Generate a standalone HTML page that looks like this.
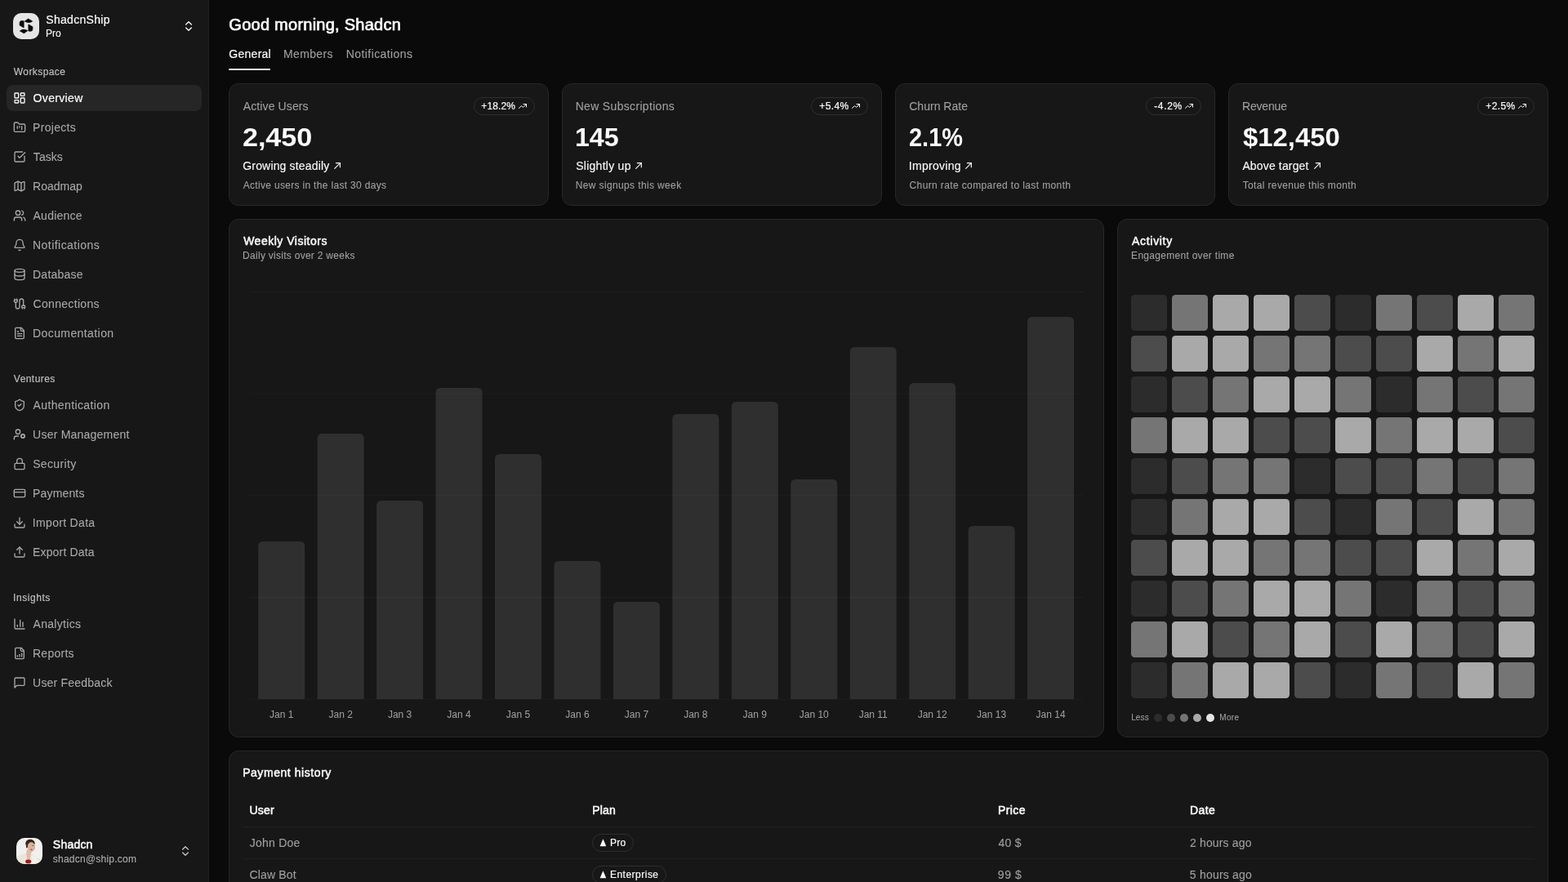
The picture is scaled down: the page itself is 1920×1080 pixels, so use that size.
<!DOCTYPE html>
<html lang="en">
<head>
<meta charset="utf-8">
<title>ShadcnShip – Overview</title>
<meta name="viewport" content="width=1920, initial-scale=1">
<style>
*{box-sizing:border-box;margin:0;padding:0}
html,body{width:1920px;height:1080px;overflow:hidden;background:#0a0a0a}
body{font-family:"Liberation Sans",sans-serif;color:#fafafa;position:relative}
a{color:inherit;text-decoration:none}
i,em,b{font-style:normal;font-weight:inherit}
.t{position:relative;display:inline-block;white-space:nowrap;vertical-align:top}
.sidebar{will-change:transform;position:absolute;left:0;top:0;width:256px;height:1080px;background:#171717;border-right:1px solid #202020}
.brand .logo{position:absolute;left:16px;top:16px;width:32px;height:32px;border-radius:10px;background:#e5e5e5;overflow:hidden}
.lg{fill:#0a0a0a}
.bname{position:absolute;left:56px;top:14px;font-size:14px;line-height:20px;white-space:nowrap}
.bplan{position:absolute;left:56px;top:33px;font-size:12px;line-height:16px;white-space:nowrap}
.ic{display:block;flex:none}
.chev{position:absolute;left:223px;top:24px;color:#fafafa}
.chev2{position:absolute;left:219px;top:1034px;color:#c4c4c4}
.glabel{position:absolute;left:16px;height:32px;line-height:32px;font-size:12px;color:#bebebe;white-space:nowrap}
.mi{position:absolute;left:8px;width:239px;height:32px;border-radius:8px;color:#a9a9a9;font-size:14px;line-height:20px;white-space:nowrap}
.mi .ic{position:absolute;left:8px;top:8px}
.mi .t{position:absolute;left:32px;top:6px}
.mi.active{background:#262626;color:#fafafa}
.user .avatar{position:absolute;left:20px;top:1026px;width:32px;height:32px;border-radius:10px;overflow:hidden}
.avb{filter:blur(.7px)}
.uname{position:absolute;left:64px;top:1024px;font-size:14px;line-height:20px;white-space:nowrap}
.umail{position:absolute;left:64px;top:1044px;font-size:12px;line-height:16px;color:#b0b0b0;white-space:nowrap}
main{will-change:transform;position:absolute;left:0;top:0;width:1920px;height:1080px}
.title{position:absolute;left:280px;top:16px;font-size:20px;line-height:28px;font-weight:400;white-space:nowrap}
.tabs{position:absolute;left:0;top:0}
.tab{position:absolute;top:56px;font-size:14px;line-height:20px;color:#a1a1a1;white-space:nowrap}
.tab.on{color:#fafafa}
.t1{left:280px}.t2{left:347px}.t3{left:424px}
.tabline{position:absolute;left:280px;top:84px;width:51px;height:2px;border-radius:1px;background:#fafafa}
.card{position:absolute;background:#171717;border:1px solid #272727;border-radius:12px}
.stat{top:102px;width:392px;height:150px}
.slabel{position:absolute;left:16px;top:17px;font-size:14px;line-height:20px;color:#a1a1a1;white-space:nowrap}
.badge{position:absolute;right:16px;top:16px;height:22px;border:1px solid #2e2e2e;border-radius:11px;font-size:12px;line-height:16px;white-space:nowrap}
.badge .t{position:absolute;left:8px;top:2px}
.badge .ic{position:absolute;right:8px;top:4px}
.sval{position:absolute;left:16px;top:47px;font-size:30.500px;line-height:36px;font-weight:400;white-space:nowrap}
.strend{position:absolute;left:16px;top:90px;font-size:14px;line-height:20px;white-space:nowrap}
.strend .ic{position:absolute;top:2px}
.sdesc{position:absolute;left:16px;top:116px;font-size:12px;line-height:16px;color:#a1a1a1;white-space:nowrap}
.chartcard{left:280px;top:268px;width:1072px;height:635px}
.actcard{left:1368px;top:268px;width:528px;height:635px}
.paycard{left:280px;top:919px;width:1616px;height:200px}
.ctitle{position:absolute;left:16px;top:16px;font-size:14px;line-height:20px;font-weight:400;white-space:nowrap}
.csub{position:absolute;left:16px;top:36px;font-size:12px;line-height:16px;color:#a1a1a1;white-space:nowrap}
.chart{position:absolute;left:-1px;top:-1px}
.chart .grid line{stroke:#1f1f1f;stroke-width:1}
.chart .bars path{fill:#fafafa;fill-opacity:.11}
.chart .xl text{font-family:"Liberation Sans",sans-serif;font-size:12px;fill:#a1a1a1}
.heat{position:absolute;left:16px;top:92px;width:494px;height:494px}
.heat i{position:absolute;width:44px;height:44px;border-radius:4.500px}
.l0{background:#2c2c2c}.l1{background:#4c4c4c}.l2{background:#757575}.l3{background:#a9a9a9}
.legend{position:absolute;left:16px;top:604px;height:12px;font-size:10px;line-height:12px;color:#a1a1a1;white-space:nowrap}
.legend div{position:absolute;top:0}
.legend .less{left:0}.legend .more{left:108px}
.legend .d{position:absolute;top:1px;width:10px;height:10px;border-radius:50%}
.d0{left:28px;background:#2c2c2c}.d1{left:44px;background:#4c4c4c}.d2{left:60px;background:#757575}.d3{left:76px;background:#a9a9a9}.d4{left:92px;background:#e5e5e5}
.th,.tr{position:absolute;left:16px;width:1582px;font-size:14px;line-height:20px;white-space:nowrap}
.th{top:52px;height:41px;font-weight:400;border-bottom:1px solid #212121}
.tr{height:39px;color:#a1a1a1;border-bottom:1px solid #212121}
.th>div{position:absolute;top:10px}
.tr>div{position:absolute;top:9px}
.c1{left:8px}.c2{left:428px}.c3{left:925px}.c4{left:1160px}
.pbadge{position:absolute;left:0;top:-1px;height:22px;border:1px solid #2e2e2e;border-radius:11px;font-size:12px;line-height:16px;color:#fafafa}
.pbadge .tri{position:absolute;left:8px;top:4.800px}
.pbadge .t{position:absolute;left:21px;top:2px}
/* weight emulation */
.t{-webkit-text-stroke:.08px currentColor}
.bname .t,.glabel .t,.mi.active .t,.badge .t,.pbadge .t,.tab.on .t{-webkit-text-stroke:.2px currentColor}
.strend .t{-webkit-text-stroke:.13px currentColor}
.title .t{-webkit-text-stroke:.7px currentColor}
.sval .t{-webkit-text-stroke:0;font-weight:700}
.ctitle .t,.th .t,.uname .t{-webkit-text-stroke:.5px currentColor}

#bname{left:0.25px;letter-spacing:0.307px}
#bplan{left:0.09px;letter-spacing:-0.009px}
#g0{left:0.87px;letter-spacing:0.398px}
#g1{left:0.85px;letter-spacing:0.442px}
#g2{left:0.04px;letter-spacing:0.554px}
#m0{left:32.60px;letter-spacing:0.333px}
#m1{left:32.00px;letter-spacing:0.322px}
#m2{left:32.86px;letter-spacing:0.032px}
#m3{left:32.00px;letter-spacing:0.026px}
#m4{left:32.56px;letter-spacing:0.233px}
#m5{left:32.00px;letter-spacing:0.460px}
#m6{left:32.00px;letter-spacing:0.246px}
#m7{left:32.53px;letter-spacing:0.317px}
#m8{left:32.00px;letter-spacing:0.413px}
#m9{left:32.56px;letter-spacing:0.377px}
#m10{left:32.09px;letter-spacing:0.222px}
#m11{left:32.18px;letter-spacing:0.347px}
#m12{left:32.00px;letter-spacing:0.169px}
#m13{left:31.86px;letter-spacing:0.312px}
#m14{left:32.00px;letter-spacing:0.162px}
#m15{left:32.56px;letter-spacing:0.299px}
#m16{left:32.00px;letter-spacing:0.255px}
#m17{left:32.09px;letter-spacing:0.206px}
#uname{left:0.85px;letter-spacing:0.210px}
#umail{left:0.82px;letter-spacing:0.232px}
#title{left:0.36px;letter-spacing:0.251px}
#tab1{left:0.36px;letter-spacing:0.259px}
#tab2{left:0.12px;letter-spacing:0.327px}
#tab3{left:-0.26px;letter-spacing:0.418px}
#s0l{left:0.74px;letter-spacing:0.118px}
#s0v{left:0.19px;letter-spacing:-0.065px;transform:scaleX(1.1194);transform-origin:0 50%}
#s0t{left:0.28px;letter-spacing:0.166px}
#s0d{left:0.67px;letter-spacing:0.319px}
#s1l{left:-0.36px;letter-spacing:0.329px}
#s1v{left:-0.52px;letter-spacing:-0.080px;transform:scaleX(1.0553);transform-origin:0 50%}
#s1t{left:0.23px;letter-spacing:0.260px}
#s1d{left:-0.29px;letter-spacing:0.369px}
#s2l{left:0.24px;letter-spacing:0.018px}
#s2v{left:-0.32px;letter-spacing:0.008px;transform:scaleX(0.9483);transform-origin:0 50%}
#s2t{left:-0.25px;letter-spacing:0.297px}
#s2d{left:0.57px;letter-spacing:0.376px}
#s3l{left:-0.02px;letter-spacing:-0.183px}
#s3v{left:0.51px;letter-spacing:-0.009px;transform:scaleX(1.0773);transform-origin:0 50%}
#s3t{left:0.38px;letter-spacing:0.151px}
#s3d{left:0.68px;letter-spacing:0.358px}
#s0b{left:8.35px;letter-spacing:0.133px}
#s1b{left:9.35px;letter-spacing:0.366px}
#s2b{left:9.13px;letter-spacing:0.684px}
#s3b{left:9.35px;letter-spacing:0.366px}
#ct1{left:1.14px;letter-spacing:0.513px}
#cs1{left:0.11px;letter-spacing:0.275px}
#ct2{left:1.10px;letter-spacing:0.677px}
#cs2{left:0.11px;letter-spacing:0.288px}
#less{left:0.18px;letter-spacing:0.116px}
#more{left:0.26px;letter-spacing:0.306px}
#pt{left:0.13px;letter-spacing:0.561px}
#h1{left:0.61px;letter-spacing:0.130px}
#h2{left:0.13px;letter-spacing:0.205px}
#h3{left:-0.12px;letter-spacing:0.446px}
#h4{left:-0.12px;letter-spacing:0.425px}
#r0c1{left:0.85px;letter-spacing:0.213px}
#r1c1{left:0.62px;letter-spacing:0.143px}
#r0c2{left:20.97px;letter-spacing:0.210px}
#r1c2{left:20.96px;letter-spacing:0.489px}
#r0c3{left:0.48px;letter-spacing:0.292px}
#r1c3{left:-0.19px;letter-spacing:0.567px}
#r0c4{left:-0.03px;letter-spacing:0.157px}
#r1c4{left:-0.17px;letter-spacing:0.207px}
</style>
</head>
<body>
<aside class="sidebar">
<div class="brand">
<div class="logo"><svg width="32" height="32" viewBox="0 0 32 32"><g class="lg" stroke="#0a0a0a" stroke-width=".800" stroke-linejoin="round"><path d="M14.200 10.100 18.600 7.100 23.600 10Q21.500 11.600 19 11.600 16.500 11.400 14.200 10.100Z"/><path d="M13.100 9.800 10.600 9.500Q8.100 9.600 8.100 12V14.900L13.100 17.800Z"/><path d="M18.900 13.900 23.900 16.800V19.700Q23.900 22.100 21.400 22.200L18.900 21.900Z"/><path d="M8.400 21.900Q10.600 20.200 13 20.100 15.500 20.300 17.800 21.600L13.400 24.700Z"/></g></svg></div>
<div class="bname"><span id="bname" class="t">ShadcnShip</span></div>
<div class="bplan"><span id="bplan" class="t">Pro</span></div>
<svg class="ic chev" width="16" height="16" viewBox="0 0 24 24" fill="none" stroke="currentColor" stroke-width="2" stroke-linecap="round" stroke-linejoin="round"><path d="m7 15 5 5 5-5"/><path d="m7 9 5-5 5 5"/></svg>
</div>
<div class="glabel" style="top:72px"><span id="g0" class="t">Workspace</span></div>
<a class="mi active" style="top:104px"><svg class="ic" width="16" height="16" viewBox="0 0 24 24" fill="none" stroke="currentColor" stroke-width="2" stroke-linecap="round" stroke-linejoin="round"><rect width="7" height="9" x="3" y="3" rx="1"/><rect width="7" height="5" x="14" y="3" rx="1"/><rect width="7" height="9" x="14" y="12" rx="1"/><rect width="7" height="5" x="3" y="16" rx="1"/></svg><span id="m0" class="t">Overview</span></a>
<a class="mi" style="top:140px"><svg class="ic" width="16" height="16" viewBox="0 0 24 24" fill="none" stroke="currentColor" stroke-width="2" stroke-linecap="round" stroke-linejoin="round"><path d="M4 20h16a2 2 0 0 0 2-2V8a2 2 0 0 0-2-2h-7.93a2 2 0 0 1-1.66-.9l-.82-1.2A2 2 0 0 0 7.93 3H4a2 2 0 0 0-2 2v13c0 1.1.9 2 2 2Z"/><path d="M8 10v4"/><path d="M12 10v2"/><path d="M16 10v6"/></svg><span id="m1" class="t">Projects</span></a>
<a class="mi" style="top:176px"><svg class="ic" width="16" height="16" viewBox="0 0 24 24" fill="none" stroke="currentColor" stroke-width="2" stroke-linecap="round" stroke-linejoin="round"><path d="M21 10.656V19a2 2 0 0 1-2 2H5a2 2 0 0 1-2-2V5a2 2 0 0 1 2-2h12.344"/><path d="m9 11 3 3L22 4"/></svg><span id="m2" class="t">Tasks</span></a>
<a class="mi" style="top:212px"><svg class="ic" width="16" height="16" viewBox="0 0 24 24" fill="none" stroke="currentColor" stroke-width="2" stroke-linecap="round" stroke-linejoin="round"><path d="M14.106 5.553a2 2 0 0 0 1.788 0l3.659-1.83A1 1 0 0 1 21 4.619v12.764a1 1 0 0 1-.553.894l-4.553 2.277a2 2 0 0 1-1.788 0l-4.212-2.106a2 2 0 0 0-1.788 0l-3.659 1.83A1 1 0 0 1 3 19.381V6.618a1 1 0 0 1 .553-.894l4.553-2.277a2 2 0 0 1 1.788 0z"/><path d="M15 5.764v15"/><path d="M9 3.236v15"/></svg><span id="m3" class="t">Roadmap</span></a>
<a class="mi" style="top:248px"><svg class="ic" width="16" height="16" viewBox="0 0 24 24" fill="none" stroke="currentColor" stroke-width="2" stroke-linecap="round" stroke-linejoin="round"><path d="M16 21v-2a4 4 0 0 0-4-4H6a4 4 0 0 0-4 4v2"/><circle cx="9" cy="7" r="4"/><path d="M22 21v-2a4 4 0 0 0-3-3.87"/><path d="M16 3.13a4 4 0 0 1 0 7.75"/></svg><span id="m4" class="t">Audience</span></a>
<a class="mi" style="top:284px"><svg class="ic" width="16" height="16" viewBox="0 0 24 24" fill="none" stroke="currentColor" stroke-width="2" stroke-linecap="round" stroke-linejoin="round"><path d="M10.268 21a2 2 0 0 0 3.464 0"/><path d="M3.262 15.326A1 1 0 0 0 4 17h16a1 1 0 0 0 .74-1.673C19.41 13.956 18 12.499 18 8A6 6 0 0 0 6 8c0 4.499-1.411 5.956-2.738 7.326"/></svg><span id="m5" class="t">Notifications</span></a>
<a class="mi" style="top:320px"><svg class="ic" width="16" height="16" viewBox="0 0 24 24" fill="none" stroke="currentColor" stroke-width="2" stroke-linecap="round" stroke-linejoin="round"><ellipse cx="12" cy="5" rx="9" ry="3"/><path d="M3 5V19A9 3 0 0 0 21 19V5"/><path d="M3 12A9 3 0 0 0 21 12"/></svg><span id="m6" class="t">Database</span></a>
<a class="mi" style="top:356px"><svg class="ic" width="16" height="16" viewBox="0 0 24 24" fill="none" stroke="currentColor" stroke-width="2" stroke-linecap="round" stroke-linejoin="round"><path d="M17 21v-2a1 1 0 0 1-1-1v-1a2 2 0 0 1 2-2h2a2 2 0 0 1 2 2v1a1 1 0 0 1-1 1"/><path d="M19 15V6.5a1 1 0 0 0-7 0v11a1 1 0 0 1-7 0V9"/><path d="M21 21v-2h-4"/><path d="M3 5h4V3"/><path d="M7 5a1 1 0 0 1 1 1v1a2 2 0 0 1-2 2H4a2 2 0 0 1-2-2V6a1 1 0 0 1 1-1V3"/></svg><span id="m7" class="t">Connections</span></a>
<a class="mi" style="top:392px"><svg class="ic" width="16" height="16" viewBox="0 0 24 24" fill="none" stroke="currentColor" stroke-width="2" stroke-linecap="round" stroke-linejoin="round"><path d="M15 2H6a2 2 0 0 0-2 2v16a2 2 0 0 0 2 2h12a2 2 0 0 0 2-2V7Z"/><path d="M14 2v4a2 2 0 0 0 2 2h4"/><path d="M10 9H8"/><path d="M16 13H8"/><path d="M16 17H8"/></svg><span id="m8" class="t">Documentation</span></a>
<div class="glabel" style="top:448px"><span id="g1" class="t">Ventures</span></div>
<a class="mi" style="top:480px"><svg class="ic" width="16" height="16" viewBox="0 0 24 24" fill="none" stroke="currentColor" stroke-width="2" stroke-linecap="round" stroke-linejoin="round"><path d="M20 13c0 5-3.5 7.5-7.66 8.95a1 1 0 0 1-.67-.01C7.5 20.500 4 18 4 13V6a1 1 0 0 1 1-1c2 0 4.5-1.200 6.240-2.720a1.170 1.170 0 0 1 1.520 0C14.510 3.810 17 5 19 5a1 1 0 0 1 1 1z"/><path d="m9 12 2 2 4-4"/></svg><span id="m9" class="t">Authentication</span></a>
<a class="mi" style="top:516px"><svg class="ic" width="16" height="16" viewBox="0 0 24 24" fill="none" stroke="currentColor" stroke-width="2" stroke-linecap="round" stroke-linejoin="round"><path d="M10 15H6a4 4 0 0 0-4 4v2"/><path d="m14.305 16.530.923-.382"/><path d="m15.228 13.852-.923-.383"/><path d="m16.852 12.228-.383-.923"/><path d="m16.852 17.772-.383.924"/><path d="m19.148 12.228.383-.923"/><path d="m19.530 18.696-.382-.924"/><path d="m20.772 13.852.924-.383"/><path d="m20.772 16.148.924.383"/><circle cx="18" cy="15" r="3"/><circle cx="9" cy="7" r="4"/></svg><span id="m10" class="t">User Management</span></a>
<a class="mi" style="top:552px"><svg class="ic" width="16" height="16" viewBox="0 0 24 24" fill="none" stroke="currentColor" stroke-width="2" stroke-linecap="round" stroke-linejoin="round"><rect width="18" height="11" x="3" y="11" rx="2" ry="2"/><path d="M7 11V7a5 5 0 0 1 10 0v4"/></svg><span id="m11" class="t">Security</span></a>
<a class="mi" style="top:588px"><svg class="ic" width="16" height="16" viewBox="0 0 24 24" fill="none" stroke="currentColor" stroke-width="2" stroke-linecap="round" stroke-linejoin="round"><rect width="20" height="14" x="2" y="5" rx="2"/><line x1="2" x2="22" y1="10" y2="10"/></svg><span id="m12" class="t">Payments</span></a>
<a class="mi" style="top:624px"><svg class="ic" width="16" height="16" viewBox="0 0 24 24" fill="none" stroke="currentColor" stroke-width="2" stroke-linecap="round" stroke-linejoin="round"><path d="M12 15V3"/><path d="M21 15v4a2 2 0 0 1-2 2H5a2 2 0 0 1-2-2v-4"/><path d="m7 10 5 5 5-5"/></svg><span id="m13" class="t">Import Data</span></a>
<a class="mi" style="top:660px"><svg class="ic" width="16" height="16" viewBox="0 0 24 24" fill="none" stroke="currentColor" stroke-width="2" stroke-linecap="round" stroke-linejoin="round"><path d="M12 3v12"/><path d="m17 8-5-5-5 5"/><path d="M21 15v4a2 2 0 0 1-2 2H5a2 2 0 0 1-2-2v-4"/></svg><span id="m14" class="t">Export Data</span></a>
<div class="glabel" style="top:716px"><span id="g2" class="t">Insights</span></div>
<a class="mi" style="top:748px"><svg class="ic" width="16" height="16" viewBox="0 0 24 24" fill="none" stroke="currentColor" stroke-width="2" stroke-linecap="round" stroke-linejoin="round"><path d="M3 3v16a2 2 0 0 0 2 2h16"/><path d="M18 17V9"/><path d="M13 17V5"/><path d="M8 17v-3"/></svg><span id="m15" class="t">Analytics</span></a>
<a class="mi" style="top:784px"><svg class="ic" width="16" height="16" viewBox="0 0 24 24" fill="none" stroke="currentColor" stroke-width="2" stroke-linecap="round" stroke-linejoin="round"><path d="M15 2H6a2 2 0 0 0-2 2v16a2 2 0 0 0 2 2h12a2 2 0 0 0 2-2V7Z"/><path d="M14 2v4a2 2 0 0 0 2 2h4"/><path d="M8 18v-2"/><path d="M12 18v-4"/><path d="M16 18v-6"/></svg><span id="m16" class="t">Reports</span></a>
<a class="mi" style="top:820px"><svg class="ic" width="16" height="16" viewBox="0 0 24 24" fill="none" stroke="currentColor" stroke-width="2" stroke-linecap="round" stroke-linejoin="round"><path d="M21 15a2 2 0 0 1-2 2H7l-4 4V5a2 2 0 0 1 2-2h14a2 2 0 0 1 2 2z"/></svg><span id="m17" class="t">User Feedback</span></a>
<div class="user">
<div class="avatar"><svg width="32" height="32" viewBox="0 0 32 32"><rect width="32" height="32" fill="#f1f0ef"/><g class="avb"><path d="M-2 34V23.500L6 20.500 12 18.500 19.500 20 26 24.500 34 27V34Z" fill="#e8e6d9"/><path d="M19 20.500 24 23.500 30 32H18Z" fill="#f0efe9"/><path d="M13 13.500 12.200 19.500 13.200 27.500H16.500L17.800 19.500 19.500 16Z" fill="#dfbda8"/><ellipse cx="17" cy="6.500" rx="5.700" ry="4.700" fill="#35251f"/><path d="M11.400 6.500 14.500 5.500 14.800 11.500 12.300 12.500Z" fill="#3f2c24"/><ellipse cx="18.400" cy="11" rx="4.600" ry="5.800" fill="#d9b39c" transform="rotate(-8 18.400 11)"/><ellipse cx="20.500" cy="9.300" rx="1.600" ry=".600" fill="#8a6a5a"/><ellipse cx="18.400" cy="14.300" rx="1.400" ry=".750" fill="#b4554a"/><ellipse cx="14.700" cy="28.900" rx="3.600" ry="2.300" fill="#ae141b"/></g></svg></div>
<div class="uname"><span id="uname" class="t">Shadcn</span></div>
<div class="umail"><span id="umail" class="t">shadcn@ship.com</span></div>
<svg class="ic chev2" width="16" height="16" viewBox="0 0 24 24" fill="none" stroke="currentColor" stroke-width="2" stroke-linecap="round" stroke-linejoin="round"><path d="m7 15 5 5 5-5"/><path d="m7 9 5-5 5 5"/></svg>
</div>
</aside>
<main>
<h1 class="title"><span id="title" class="t">Good morning, Shadcn</span></h1>
<nav class="tabs"><a class="tab on t1"><span id="tab1" class="t">General</span></a><a class="tab t2"><span id="tab2" class="t">Members</span></a><a class="tab t3"><span id="tab3" class="t">Notifications</span></a><i class="tabline"></i></nav>
<section class="card stat s0" style="left:280px">
<div class="slabel"><span id="s0l" class="t">Active Users</span></div>
<div class="badge" style="width:75px"><span id="s0b" class="t">+18.2%</span><svg class="ic" width="12" height="12" viewBox="0 0 24 24" fill="none" stroke="currentColor" stroke-width="2" stroke-linecap="round" stroke-linejoin="round"><path d="M3 17l6-6 4 4 8-8"/><path d="M14 7h7v7"/></svg></div>
<div class="sval"><span id="s0v" class="t">2,450</span></div>
<div class="strend"><span id="s0t" class="t">Growing steadily</span><svg class="ic" width="16" height="16" viewBox="0 0 24 24" fill="none" stroke="currentColor" stroke-width="1.75" stroke-linecap="round" stroke-linejoin="round" style="left:108px;overflow:visible"><g transform="translate(0.15 0.00)"><path d="M17 7 7 17"/><path d="M9.500 7h7.500v7.500"/></g></svg></div>
<div class="sdesc"><span id="s0d" class="t">Active users in the last 30 days</span></div>
</section>
<section class="card stat s1" style="left:688px">
<div class="slabel"><span id="s1l" class="t">New Subscriptions</span></div>
<div class="badge" style="width:70px"><span id="s1b" class="t">+5.4%</span><svg class="ic" width="12" height="12" viewBox="0 0 24 24" fill="none" stroke="currentColor" stroke-width="2" stroke-linecap="round" stroke-linejoin="round"><path d="M3 17l6-6 4 4 8-8"/><path d="M14 7h7v7"/></svg></div>
<div class="sval"><span id="s1v" class="t">145</span></div>
<div class="strend"><span id="s1t" class="t">Slightly up</span><svg class="ic" width="16" height="16" viewBox="0 0 24 24" fill="none" stroke="currentColor" stroke-width="1.75" stroke-linecap="round" stroke-linejoin="round" style="left:69px"><path d="M17 7 7 17"/><path d="M9.500 7h7.500v7.500"/></svg></div>
<div class="sdesc"><span id="s1d" class="t">New signups this week</span></div>
</section>
<section class="card stat s2" style="left:1096px">
<div class="slabel"><span id="s2l" class="t">Churn Rate</span></div>
<div class="badge" style="width:68px"><span id="s2b" class="t">-4.2%</span><svg class="ic" width="12" height="12" viewBox="0 0 24 24" fill="none" stroke="currentColor" stroke-width="2" stroke-linecap="round" stroke-linejoin="round"><path d="M3 17l6-6 4 4 8-8"/><path d="M14 7h7v7"/></svg></div>
<div class="sval"><span id="s2v" class="t">2.1%</span></div>
<div class="strend"><span id="s2t" class="t">Improving</span><svg class="ic" width="16" height="16" viewBox="0 0 24 24" fill="none" stroke="currentColor" stroke-width="1.75" stroke-linecap="round" stroke-linejoin="round" style="left:65px"><path d="M17 7 7 17"/><path d="M9.500 7h7.500v7.500"/></svg></div>
<div class="sdesc"><span id="s2d" class="t">Churn rate compared to last month</span></div>
</section>
<section class="card stat s3" style="left:1504px">
<div class="slabel"><span id="s3l" class="t">Revenue</span></div>
<div class="badge" style="width:70px"><span id="s3b" class="t">+2.5%</span><svg class="ic" width="12" height="12" viewBox="0 0 24 24" fill="none" stroke="currentColor" stroke-width="2" stroke-linecap="round" stroke-linejoin="round"><path d="M3 17l6-6 4 4 8-8"/><path d="M14 7h7v7"/></svg></div>
<div class="sval"><span id="s3v" class="t">$12,450</span></div>
<div class="strend"><span id="s3t" class="t">Above target</span><svg class="ic" width="16" height="16" viewBox="0 0 24 24" fill="none" stroke="currentColor" stroke-width="1.75" stroke-linecap="round" stroke-linejoin="round" style="left:84px"><path d="M17 7 7 17"/><path d="M9.500 7h7.500v7.500"/></svg></div>
<div class="sdesc"><span id="s3d" class="t">Total revenue this month</span></div>
</section>
<section class="card chartcard">
<h2 class="ctitle"><span id="ct1" class="t">Weekly Visitors</span></h2>
<p class="csub"><span id="cs1" class="t">Daily visits over 2 weeks</span></p>
<svg class="chart" width="1072" height="634" viewBox="0 0 1072 634">
<g class="grid"><line x1="26" x2="1046" y1="89.50" y2="89.50"/><line x1="26" x2="1046" y1="214.00" y2="214.00"/><line x1="26" x2="1046" y1="338.75" y2="338.75"/><line x1="26" x2="1046" y1="463.50" y2="463.50"/><line x1="26" x2="1046" y1="588.25" y2="588.25"/></g>
<g class="bars"><path d="M36.20 588V401q0-6 6-6h45q6 0 6 6V588z"/><path d="M108.65 588V269q0-6 6-6h45q6 0 6 6V588z"/><path d="M181.10 588V351q0-6 6-6h45q6 0 6 6V588z"/><path d="M253.55 588V213q0-6 6-6h45q6 0 6 6V588z"/><path d="M326.00 588V294q0-6 6-6h45q6 0 6 6V588z"/><path d="M398.45 588V425q0-6 6-6h45q6 0 6 6V588z"/><path d="M470.90 588V475q0-6 6-6h45q6 0 6 6V588z"/><path d="M543.35 588V245q0-6 6-6h45q6 0 6 6V588z"/><path d="M615.80 588V230q0-6 6-6h45q6 0 6 6V588z"/><path d="M688.25 588V325q0-6 6-6h45q6 0 6 6V588z"/><path d="M760.70 588V163q0-6 6-6h45q6 0 6 6V588z"/><path d="M833.15 588V207q0-6 6-6h45q6 0 6 6V588z"/><path d="M905.60 588V382q0-6 6-6h45q6 0 6 6V588z"/><path d="M978.05 588V126q0-6 6-6h45q6 0 6 6V588z"/></g>
<g class="xl"><text x="64.70" y="611" text-anchor="middle">Jan 1</text><text x="137.15" y="611" text-anchor="middle">Jan 2</text><text x="209.60" y="611" text-anchor="middle">Jan 3</text><text x="282.05" y="611" text-anchor="middle">Jan 4</text><text x="354.50" y="611" text-anchor="middle">Jan 5</text><text x="426.95" y="611" text-anchor="middle">Jan 6</text><text x="499.40" y="611" text-anchor="middle">Jan 7</text><text x="571.85" y="611" text-anchor="middle">Jan 8</text><text x="644.30" y="611" text-anchor="middle">Jan 9</text><text x="716.75" y="611" text-anchor="middle">Jan 10</text><text x="789.20" y="611" text-anchor="middle">Jan 11</text><text x="861.65" y="611" text-anchor="middle">Jan 12</text><text x="934.10" y="611" text-anchor="middle">Jan 13</text><text x="1006.55" y="611" text-anchor="middle">Jan 14</text></g>
</svg>
</section>
<section class="card actcard">
<h2 class="ctitle"><span id="ct2" class="t">Activity</span></h2>
<p class="csub"><span id="cs2" class="t">Engagement over time</span></p>
<div class="heat"><i class="l0" style="left:0px;top:0px"></i><i class="l2" style="left:50px;top:0px"></i><i class="l3" style="left:100px;top:0px"></i><i class="l3" style="left:150px;top:0px"></i><i class="l1" style="left:200px;top:0px"></i><i class="l0" style="left:250px;top:0px"></i><i class="l2" style="left:300px;top:0px"></i><i class="l1" style="left:350px;top:0px"></i><i class="l3" style="left:400px;top:0px"></i><i class="l2" style="left:450px;top:0px"></i><i class="l1" style="left:0px;top:50px"></i><i class="l3" style="left:50px;top:50px"></i><i class="l3" style="left:100px;top:50px"></i><i class="l2" style="left:150px;top:50px"></i><i class="l2" style="left:200px;top:50px"></i><i class="l1" style="left:250px;top:50px"></i><i class="l1" style="left:300px;top:50px"></i><i class="l3" style="left:350px;top:50px"></i><i class="l2" style="left:400px;top:50px"></i><i class="l3" style="left:450px;top:50px"></i><i class="l0" style="left:0px;top:100px"></i><i class="l1" style="left:50px;top:100px"></i><i class="l2" style="left:100px;top:100px"></i><i class="l3" style="left:150px;top:100px"></i><i class="l3" style="left:200px;top:100px"></i><i class="l2" style="left:250px;top:100px"></i><i class="l0" style="left:300px;top:100px"></i><i class="l2" style="left:350px;top:100px"></i><i class="l1" style="left:400px;top:100px"></i><i class="l2" style="left:450px;top:100px"></i><i class="l2" style="left:0px;top:150px"></i><i class="l3" style="left:50px;top:150px"></i><i class="l3" style="left:100px;top:150px"></i><i class="l1" style="left:150px;top:150px"></i><i class="l1" style="left:200px;top:150px"></i><i class="l3" style="left:250px;top:150px"></i><i class="l2" style="left:300px;top:150px"></i><i class="l3" style="left:350px;top:150px"></i><i class="l3" style="left:400px;top:150px"></i><i class="l1" style="left:450px;top:150px"></i><i class="l0" style="left:0px;top:200px"></i><i class="l1" style="left:50px;top:200px"></i><i class="l2" style="left:100px;top:200px"></i><i class="l2" style="left:150px;top:200px"></i><i class="l0" style="left:200px;top:200px"></i><i class="l1" style="left:250px;top:200px"></i><i class="l1" style="left:300px;top:200px"></i><i class="l2" style="left:350px;top:200px"></i><i class="l1" style="left:400px;top:200px"></i><i class="l2" style="left:450px;top:200px"></i><i class="l0" style="left:0px;top:250px"></i><i class="l2" style="left:50px;top:250px"></i><i class="l3" style="left:100px;top:250px"></i><i class="l3" style="left:150px;top:250px"></i><i class="l1" style="left:200px;top:250px"></i><i class="l0" style="left:250px;top:250px"></i><i class="l2" style="left:300px;top:250px"></i><i class="l1" style="left:350px;top:250px"></i><i class="l3" style="left:400px;top:250px"></i><i class="l2" style="left:450px;top:250px"></i><i class="l1" style="left:0px;top:300px"></i><i class="l3" style="left:50px;top:300px"></i><i class="l3" style="left:100px;top:300px"></i><i class="l2" style="left:150px;top:300px"></i><i class="l2" style="left:200px;top:300px"></i><i class="l1" style="left:250px;top:300px"></i><i class="l1" style="left:300px;top:300px"></i><i class="l3" style="left:350px;top:300px"></i><i class="l2" style="left:400px;top:300px"></i><i class="l3" style="left:450px;top:300px"></i><i class="l0" style="left:0px;top:350px"></i><i class="l1" style="left:50px;top:350px"></i><i class="l2" style="left:100px;top:350px"></i><i class="l3" style="left:150px;top:350px"></i><i class="l3" style="left:200px;top:350px"></i><i class="l2" style="left:250px;top:350px"></i><i class="l0" style="left:300px;top:350px"></i><i class="l2" style="left:350px;top:350px"></i><i class="l1" style="left:400px;top:350px"></i><i class="l2" style="left:450px;top:350px"></i><i class="l2" style="left:0px;top:400px"></i><i class="l3" style="left:50px;top:400px"></i><i class="l1" style="left:100px;top:400px"></i><i class="l2" style="left:150px;top:400px"></i><i class="l3" style="left:200px;top:400px"></i><i class="l1" style="left:250px;top:400px"></i><i class="l3" style="left:300px;top:400px"></i><i class="l2" style="left:350px;top:400px"></i><i class="l1" style="left:400px;top:400px"></i><i class="l3" style="left:450px;top:400px"></i><i class="l0" style="left:0px;top:450px"></i><i class="l2" style="left:50px;top:450px"></i><i class="l3" style="left:100px;top:450px"></i><i class="l3" style="left:150px;top:450px"></i><i class="l1" style="left:200px;top:450px"></i><i class="l0" style="left:250px;top:450px"></i><i class="l2" style="left:300px;top:450px"></i><i class="l1" style="left:350px;top:450px"></i><i class="l3" style="left:400px;top:450px"></i><i class="l2" style="left:450px;top:450px"></i></div>
<div class="legend"><div class="less"><span id="less" class="t">Less</span></div><i class="d d0"></i><i class="d d1"></i><i class="d d2"></i><i class="d d3"></i><i class="d d4"></i><div class="more"><span id="more" class="t">More</span></div></div>
</section>
<section class="card paycard">
<h2 class="ctitle"><span id="pt" class="t">Payment history</span></h2>
<div class="th"><div class="c1"><span id="h1" class="t">User</span></div><div class="c2"><span id="h2" class="t">Plan</span></div><div class="c3"><span id="h3" class="t">Price</span></div><div class="c4"><span id="h4" class="t">Date</span></div></div>
<div class="tr" style="top:93px"><div class="c1"><span id="r0c1" class="t">John Doe</span></div><div class="c2"><b class="pbadge" style="width:51px"><svg class="tri" width="10" height="10" viewBox="0 0 10 10"><path d="M4.450 .300 8.100 8.700Q8.300 9.200 7.700 9.200H1.200Q.600 9.200 .800 8.700Z" fill="currentColor"/></svg><span id="r0c2" class="t">Pro</span></b></div><div class="c3"><span id="r0c3" class="t">40 $</span></div><div class="c4"><span id="r0c4" class="t">2 hours ago</span></div></div><div class="tr" style="top:132px"><div class="c1"><span id="r1c1" class="t">Claw Bot</span></div><div class="c2"><b class="pbadge" style="width:91px"><svg class="tri" width="10" height="10" viewBox="0 0 10 10"><path d="M4.450 .300 8.100 8.700Q8.300 9.200 7.700 9.200H1.200Q.600 9.200 .800 8.700Z" fill="currentColor"/></svg><span id="r1c2" class="t">Enterprise</span></b></div><div class="c3"><span id="r1c3" class="t">99 $</span></div><div class="c4"><span id="r1c4" class="t">5 hours ago</span></div></div>
</section>
</main>
</body>
</html>
